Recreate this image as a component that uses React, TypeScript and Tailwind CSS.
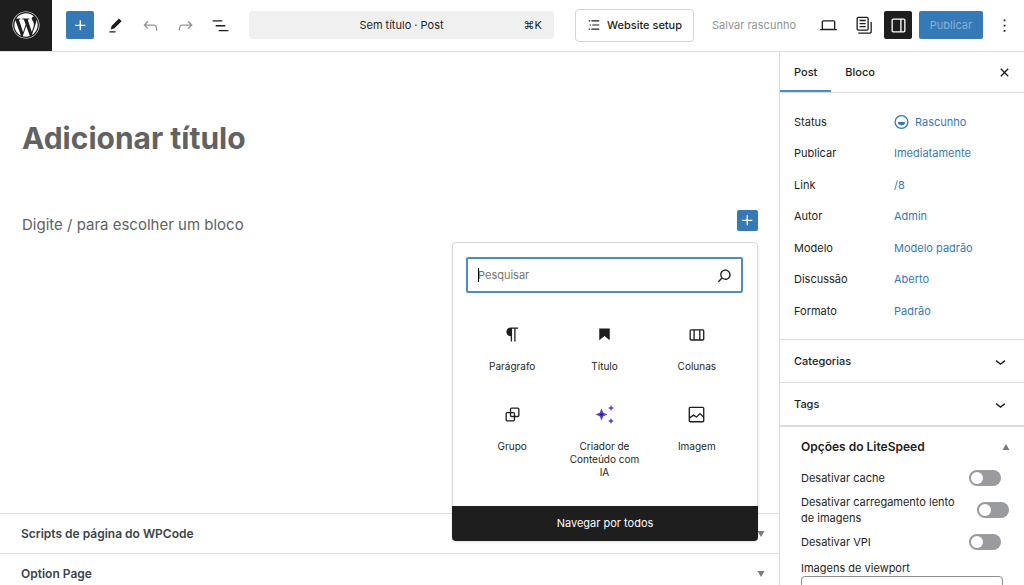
import React, { useState } from "react";
import { FaWordpress } from "react-icons/fa";

const paths = {
  plus: "M11 12.5V17.5H12.5V12.5H17.5V11H12.5V6H11V11H6V12.5H11Z",
  edit: "m19 7-3-3-8.5 8.5-1 4 4-1L19 7Zm-7 11.5H5V20h7v-1.5Z",
  undo: "M18.3 11.7c-.6-.6-1.4-.9-2.3-.9H6.7l2.9-3.3-1.1-1-4.5 5L8.5 16l1-1-2.7-2.7H16c.5 0 .9.2 1.3.5 1 1 1 3.4 1 4.5v.3h1.5v-.2c0-1.5 0-4.3-1.5-5.7z",
  redo: "M15.6 6.5l-1.1 1 2.9 3.3H8c-.9 0-1.7.3-2.3.9-1.4 1.5-1.4 4.2-1.4 5.6v.2h1.5v-.3c0-1.1 0-3.5 1-4.5.3-.3.7-.5 1.3-.5h9.2L14.5 15l1.1 1.1 4.6-4.6-4.6-5z",
  listView: "M3 6h11v1.5H3V6Zm3.5 5.5h11V13h-11v-1.5ZM21 17H10v1.5h11V17Z",
  bullets: "M3 4h2.5v2H3zM7.5 4H21v2H7.5zM4.5 11H7v2H4.5zM9 11h12v2H9zM3 18h2.5v2H3zM7.5 18H21v2H7.5z",
  desktop: "M20.5 16h-.7V8c0-1.1-.9-2-2-2H6.2c-1.1 0-2 .9-2 2v8h-.7c-.8 0-1.5.7-1.5 1.5h20c0-.8-.7-1.5-1.5-1.5zM5.7 8c0-.3.2-.5.5-.5h11.6c.3 0 .5.2.5.5v7.6H5.7V8z",
  pages: "M14.5 5.5h-7V7h7V5.5ZM7.5 9h7v1.5h-7V9Zm7 3.5h-7V14h7v-1.5ZM16 2H6a2 2 0 0 0-2 2v12a2 2 0 0 0 2 2h10a2 2 0 0 0 2-2V4a2 2 0 0 0-2-2ZM6 3.5h10a.5.5 0 0 1 .5.5v12a.5.5 0 0 1-.5.5H6a.5.5 0 0 1-.5-.5V4a.5.5 0 0 1 .5-.5ZM20 8v11c0 .69-.31 1-.999 1H6v1.5h13.001c1.52 0 2.499-.982 2.499-2.5V8H20Z",
  drawer: "M18 4H6c-1.1 0-2 .9-2 2v12c0 1.1.9 2 2 2h12c1.1 0 2-.9 2-2V6c0-1.1-.9-2-2-2zm-4 14.5H6c-.3 0-.5-.2-.5-.5V6c0-.3.2-.5.5-.5h8v13zm4.5-.5c0 .3-.2.5-.5.5h-2.5v-13H18c.3 0 .5.2.5.5v12z",
  more: "M13 19h-2v-2h2v2zm0-6h-2v-2h2v2zm0-6h-2V5h2v2z",
  search: "M13 5c-3.3 0-6 2.7-6 6 0 1.4.5 2.7 1.3 3.7l-3.8 3.8 1.1 1.1 3.8-3.8c1 .8 2.3 1.3 3.7 1.3 3.3 0 6-2.7 6-6S16.3 5 13 5zm0 10.5c-2.5 0-4.5-2-4.5-4.5s2-4.5 4.5-4.5 4.5 2 4.5 4.5-2 4.5-4.5 4.5z",
  paragraph: "m9.99609 14v-.2251l.00391.0001v6.225h1.5v-14.5h2.5v14.5h1.5v-14.5h3v-1.5h-8.50391c-2.76142 0-5 2.23858-5 5 0 2.7614 2.23858 5 5 5z",
  heading: "M6 5V18.5911L12 13.8473L18 18.5911V5H6Z",
  columns: "M15 7.5h-5v10h5v-10Zm1.5 0v10H19a.5.5 0 0 0 .5-.5V8a.5.5 0 0 0-.5-.5h-2.5ZM6 7.5h2.5v10H6a.5.5 0 0 1-.5-.5V8a.5.5 0 0 1 .5-.5ZM6 6h13a2 2 0 0 1 2 2v9a2 2 0 0 1-2 2H6a2 2 0 0 1-2-2V8a2 2 0 0 1 2-2Z",
  group: "M18 4h-7c-1.1 0-2 .9-2 2v3H6c-1.1 0-2 .9-2 2v7c0 1.1.9 2 2 2h7c1.1 0 2-.9 2-2v-3h3c1.1 0 2-.9 2-2V6c0-1.1-.9-2-2-2zm-4.5 14c0 .3-.2.5-.5.5H6c-.3 0-.5-.2-.5-.5v-7c0-.3.2-.5.5-.5h3V13c0 1.1.9 2 2 2h2.5v3zm0-4.5H11c-.3 0-.5-.2-.5-.5v-2.5H13c.3 0 .5.2.5.5v2.5zm5-.5c0 .3-.2.5-.5.5h-3V11c0-1.1-.9-2-2-2h-2.5V6c0-.3.2-.5.5-.5h7c.3 0 .5.2.5.5v7z",
  image: "M19 3H5c-1.1 0-2 .9-2 2v14c0 1.1.9 2 2 2h14c1.1 0 2-.9 2-2V5c0-1.1-.9-2-2-2zM5 4.5h14c.3 0 .5.2.5.5v8.4l-3-2.9c-.3-.3-.8-.3-1 0L11.9 14 9 12c-.3-.2-.6-.2-.8 0l-3.6 2.6V5c-.1-.3.1-.5.4-.5zm14 15H5c-.3 0-.5-.2-.5-.5v-2.4l4.1-3 3 1.9c.3.2.7.2.9-.1L16 12l3.5 3.4V19c0 .3-.2.5-.5.5z",
  chevron: "M17.5 11.6L12 16l-5.5-4.4.9-1.2L12 14l4.5-3.6 1 1.2z",
  close: "M12 13.06l3.712 3.713 1.061-1.06L13.061 12l3.712-3.712-1.06-1.06L12 10.938 8.288 7.227l-1.061 1.06L10.939 12l-3.712 3.712 1.06 1.061L12 13.061z",
};

type IconName = keyof typeof paths;

function Icon({ name, className = "size-[21px]" }: { name: IconName; className?: string }) {
  return (
    <svg viewBox="0 0 24 24" fill="currentColor" fillRule="evenodd" aria-hidden="true" className={`shrink-0 ${className}`}>
      <path d={paths[name]} />
    </svg>
  );
}

function DraftIcon() {
  return (
    <svg viewBox="0 0 16 16" aria-hidden="true" className="size-4 shrink-0">
      <circle cx="7.5" cy="8" r="6.4" fill="none" stroke="currentColor" strokeWidth="1.3" />
      <path d="M4 8h7a3.5 3.2 0 0 1-7 0z" fill="currentColor" />
    </svg>
  );
}

function SparkleIcon() {
  return (
    <svg viewBox="0 0 21 21" aria-hidden="true" className="size-[21px] shrink-0">
      <g fill="#5b3fd6">
        <path d="M7.5 4.5 9.3 8.7 13.5 10.5 9.3 12.3 7.5 16.5 5.7 12.3 1.5 10.5 5.7 8.7Z" />
        <path d="M17 1 17.9 3.1 20 4 17.9 4.9 17 7 16.1 4.9 14 4 16.1 3.1Z" />
        <path d="M17 14 17.9 16.1 20 17 17.9 17.9 17 20 16.1 17.9 14 17 16.1 16.1Z" />
      </g>
      <path d="M7.5 8.5 8.2 9.8 9.500 10.5 8.2 11.2 7.5 12.5 6.8 11.2 5.5 10.5 6.8 9.8Z" fill="#2a1a80" />
    </svg>
  );
}

function Triangle({ up = false }: { up?: boolean }) {
  return (
    <svg viewBox="0 0 8 6" aria-hidden="true" className="h-1.5 w-2 shrink-0 text-[#787c82]">
      <path d={up ? "M4 0 7.5 6H.5Z" : "M.5 0h7L4 6Z"} fill="currentColor" />
    </svg>
  );
}

function IconButton({ name, label, tone = "plain" }: { name: IconName; label: string; tone?: "plain" | "muted" | "primary" | "dark" }) {
  const tones = {
    plain: "text-[#1e1e1e]",
    muted: "text-[#949494]",
    primary: "bg-[#3579b7] text-white",
    dark: "bg-[#1e1e1e] text-white",
  };
  return (
    <button type="button" aria-label={label} className={`flex size-7 shrink-0 items-center justify-center rounded-xs ${tones[tone]}`}>
      <Icon name={name} />
    </button>
  );
}

function TopBar() {
  return (
    <header className="flex shrink-0 items-stretch border-b border-[#dcdcdc] bg-white text-[11px]">
      <a href="#painel" aria-label="Ver posts" className="flex h-[51px] w-[52px] shrink-0 items-center justify-center bg-[#1e1e1e] pb-0.5 text-white">
        <FaWordpress className="size-7" />
      </a>
      <div className="flex min-w-0 flex-1 items-center pr-1.5 pb-px pl-3.5">
        <div className="flex shrink-0 items-center gap-[7px]">
          <IconButton name="plus" label="Alternar insersor de blocos" tone="primary" />
          <IconButton name="edit" label="Ferramentas" />
          <IconButton name="undo" label="Desfazer" tone="muted" />
          <IconButton name="redo" label="Refazer" tone="muted" />
          <IconButton name="listView" label="Visão geral do documento" />
        </div>
        <button type="button" className="mr-[21px] ml-[15px] grid h-7 min-w-0 flex-1 grid-cols-[1fr_auto_1fr] items-center rounded-sm bg-[#f0f0f0] px-3">
          <span />
          <span>Sem título · Post</span>
          <span className="text-right">⌘K</span>
        </button>
        <div className="flex shrink-0 items-center gap-[7px]">
          <button type="button" className="flex h-[33px] items-center gap-1.5 rounded-sm border border-[#d5d5d5] px-[11px] font-medium">
            <Icon name="bullets" className="size-3.5" />
            Website setup
          </button>
          <button type="button" className="w-[106px] text-[#949494]">
            Salvar rascunho
          </button>
          <IconButton name="desktop" label="Ver" />
          <IconButton name="pages" label="Modelos" />
          <IconButton name="drawer" label="Configurações" tone="dark" />
          <button type="button" className="h-7 w-16 rounded-xs bg-[#3579b7] text-[#86b0d6]">
            Publicar
          </button>
          <IconButton name="more" label="Opções" />
        </div>
      </div>
    </header>
  );
}

const blocks: { label: string; icon: IconName | "sparkle" }[] = [
  { label: "Parágrafo", icon: "paragraph" },
  { label: "Título", icon: "heading" },
  { label: "Colunas", icon: "columns" },
  { label: "Grupo", icon: "group" },
  { label: "Criador de Conteúdo com IA", icon: "sparkle" },
  { label: "Imagem", icon: "image" },
];

function Inserter() {
  return (
    <div className="absolute top-full right-0 z-10 mt-1 w-[306px] overflow-hidden rounded-sm bg-white shadow-sm">
      <div className="rounded-t-sm border border-b-0 border-[#d9d9d9] pt-3.5 pr-3.5 pb-[37px] pl-[13px]">
        <div className="relative flex h-9 items-center rounded-xs border-2 border-[#4a8cc5] pr-1.5 pl-2.5">
          <input type="text" aria-label="Pesquisar" placeholder="Pesquisar" className="min-w-0 flex-1 bg-transparent text-[11px] outline-none placeholder:text-[#757575]" />
          <span className="absolute left-2.5 h-3.5 w-px bg-black" />
          <Icon name="search" />
        </div>
        <div className="mt-4 grid grid-cols-3">
          {blocks.map((block) => (
            <button key={block.label} type="button" className="flex h-20 flex-col items-center gap-[15px] px-1 pt-[15px] text-[10px] leading-[13px]">
              {block.icon === "sparkle" ? <SparkleIcon /> : <Icon name={block.icon} />}
              <span className="max-w-20">{block.label}</span>
            </button>
          ))}
        </div>
      </div>
      <button type="button" className="block h-[35px] w-full bg-[#1e1e1e] text-[11px] text-white">
        Navegar por todos
      </button>
    </div>
  );
}

function Editor() {
  return (
    <main className="flex min-w-0 flex-1 flex-col">
      <div className="min-h-0 flex-1 pt-16 pr-[21px] pl-[22px]">
        <input
          type="text"
          aria-label="Adicionar título"
          placeholder="Adicionar título"
          className="block h-11 w-full text-[30px] font-bold outline-none placeholder:text-[#626262]"
        />
        <div className="relative mt-[50px] flex items-start gap-4">
          <input
            type="text"
            aria-label="Bloco vazio"
            placeholder="Digite / para escolher um bloco"
            className="h-7 min-w-0 flex-1 text-[15px] outline-none placeholder:text-[#626262]"
          />
          <button type="button" aria-label="Adicionar bloco" className="flex size-[21px] shrink-0 items-center justify-center rounded-xs bg-[#3579b7] text-white">
            <Icon name="plus" />
          </button>
          <Inserter />
        </div>
      </div>
      <div className="h-18 shrink-0 overflow-hidden text-xs font-semibold text-[#3c434a]">
        {["Scripts de página do WPCode", "Option Page"].map((title) => (
          <button key={title} type="button" className="flex h-10 w-full items-center justify-between border-t border-[#e0e0e0] pr-3.5 pl-[21px]">
            {title}
            <Triangle />
          </button>
        ))}
      </div>
    </main>
  );
}

const summary = [
  ["Status", "Rascunho"],
  ["Publicar", "Imediatamente"],
  ["Link", "/8"],
  ["Autor", "Admin"],
  ["Modelo", "Modelo padrão"],
  ["Discussão", "Aberto"],
  ["Formato", "Padrão"],
];

function Toggle({ label, wide = false }: { label: string; wide?: boolean }) {
  const [on, setOn] = useState(false);
  return (
    <label className={`flex items-center justify-between ${wide ? "-mr-1.5" : "mr-0.5"}`}>
      <span className={wide ? "w-40" : ""}>{label}</span>
      <input type="checkbox" checked={on} onChange={() => setOn(!on)} className="peer sr-only" />
      <span className="flex h-4 w-8 shrink-0 items-center rounded-full bg-[#9a9b9f] px-0.5 peer-checked:justify-end peer-checked:bg-[#3579b7]">
        <span className="size-3 rounded-full bg-white" />
      </span>
    </label>
  );
}

function Sidebar() {
  return (
    <aside className="w-[245px] shrink-0 overflow-hidden border-l border-[#dcdcdc] text-[11px]">
      <div className="flex h-[41px] items-stretch border-b border-[#dcdcdc] pr-1.5 font-medium">
        <button type="button" className="border-y-2 border-t-transparent border-b-[#4a8cc5] px-3.5">Post</button>
        <button type="button" className="border-y-2 border-transparent px-3.5">Bloco</button>
        <button type="button" aria-label="Fechar configurações" className="ml-auto flex w-7 items-center justify-center">
          <Icon name="close" />
        </button>
      </div>
      <dl className="grid h-[246px] auto-rows-fr px-3.5 pt-[13px] pb-3">
        {summary.map(([label, value]) => (
          <div key={label} className="flex items-center">
            <dt className="w-[100px] shrink-0">{label}</dt>
            <dd>
              <button type="button" className="flex items-center gap-[5px] text-[#3579b7]">
                {label === "Status" && <DraftIcon />}
                {value}
              </button>
            </dd>
          </div>
        ))}
      </dl>
      {["Categorias", "Tags"].map((title) => (
        <button key={title} type="button" className="flex h-[43px] w-full items-center justify-between border-t border-[#dcdcdc] pr-[13px] pl-3.5 font-medium">
          {title}
          <Icon name="chevron" />
        </button>
      ))}
      <section className="border-t-2 border-[#dcdcdc] px-[21px]">
        <button type="button" className="flex h-[39px] w-[209px] items-center justify-between text-xs font-semibold">
          Opções do LiteSpeed
          <Triangle up />
        </button>
        <div className="flex flex-col gap-2 pt-1 leading-4">
          <Toggle label="Desativar cache" />
          <Toggle label="Desativar carregamento lento de imagens" wide />
          <Toggle label="Desativar VPI" />
        </div>
        <label htmlFor="viewport" className="mt-2.5 block leading-4">Imagens de viewport</label>
        <textarea id="viewport" className="block h-20 w-full resize-none rounded-sm border border-[#8c8f94]" />
      </section>
    </aside>
  );
}

export default function App() {
  return (
    <div className="flex h-screen flex-col overflow-hidden bg-white font-['Inter','Liberation_Sans',sans-serif] text-[#1e1e1e]">
      <TopBar />
      <div className="flex min-h-0 flex-1">
        <Editor />
        <Sidebar />
      </div>
    </div>
  );
}
